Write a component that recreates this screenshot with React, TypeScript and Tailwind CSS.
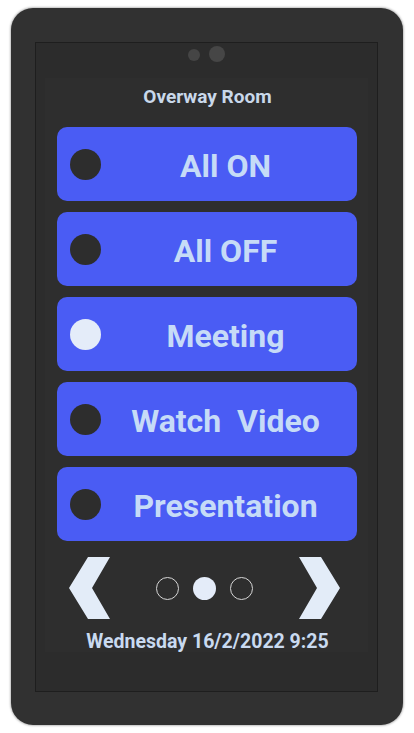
const scenes = [
  { name: "All ON", active: false },
  { name: "All OFF", active: false },
  { name: "Meeting", active: true },
  { name: "Watch\u00a0\u00a0Video", active: false },
  { name: "Presentation", active: false },
];

function Chevron({ flip }: { flip?: boolean }) {
  return (
    <svg
      width="41"
      height="62"
      viewBox="0 0 41 62"
      className={flip ? "-scale-x-100" : ""}
    >
      <polygon points="0,0 22,0 41,31 22,62 0,62 18,31" fill="#e3ecf8" />
    </svg>
  );
}

export default function App() {
  return (
    <div className="min-h-[733px] w-[414px] bg-white pl-[11px] pt-[8px] font-['Roboto',sans-serif]">
      <div className="h-[717px] w-[392px] rounded-[22px] bg-[#313131] pl-[24px] pt-[34px] shadow-[0_0_2px_1px_rgba(0,0,0,0.25)]">
        <div className="h-[650px] w-[343px] border border-[#1e1e1e] bg-[#2c2c2c]">
          <div className="flex justify-center gap-[9px] pt-[3px]">
            <div className="mt-[3px] size-[12px] rounded-full bg-[#454545]" />
            <div className="size-[16px] rounded-full bg-[#464646]" />
          </div>

          <div className="mx-[9px] mt-[16px] flex h-[574px] flex-col items-center bg-[#2e2e2e]">
            <div className="mt-[8px] pl-[2px] text-[19px] font-bold leading-[22px] text-[#c9d8ea]">
              Overway Room
            </div>

            <div className="mt-[19px] flex w-[300px] flex-col gap-[11px]">
              {scenes.map((s) => (
                <button
                  key={s.name}
                  className="flex h-[74px] items-center rounded-[10px] bg-[#4a5cf4] pl-[13px] pr-[6px]"
                >
                  <span
                    className={
                      s.active
                        ? "size-[31px] shrink-0 rounded-full bg-[#e4ecf9]"
                        : "size-[31px] shrink-0 rounded-full bg-[#2d2d2d]"
                    }
                  />
                  <span className="flex-1 pt-[4px] text-center text-[32px] font-bold leading-none text-[#c6dbf7]">
                    {s.name}
                  </span>
                </button>
              ))}
            </div>

            <div className="ml-[24px] mt-[16px] flex w-[271px] items-center justify-between self-start">
              <Chevron flip />
              <div className="flex items-center gap-[14px]">
                <div className="size-[23px] rounded-full border-[1.5px] border-[#d6d6d6]" />
                <div className="size-[23px] rounded-full bg-[#e4ecf9]" />
                <div className="size-[23px] rounded-full border-[1.5px] border-[#d6d6d6]" />
              </div>
              <Chevron />
            </div>

            <div className="mt-[11px] pl-[2px] text-[19.5px] font-bold leading-[24px] text-[#c9daf0]">
              Wednesday 16/2/2022 9:25
            </div>
          </div>
        </div>
      </div>
    </div>
  );
}
